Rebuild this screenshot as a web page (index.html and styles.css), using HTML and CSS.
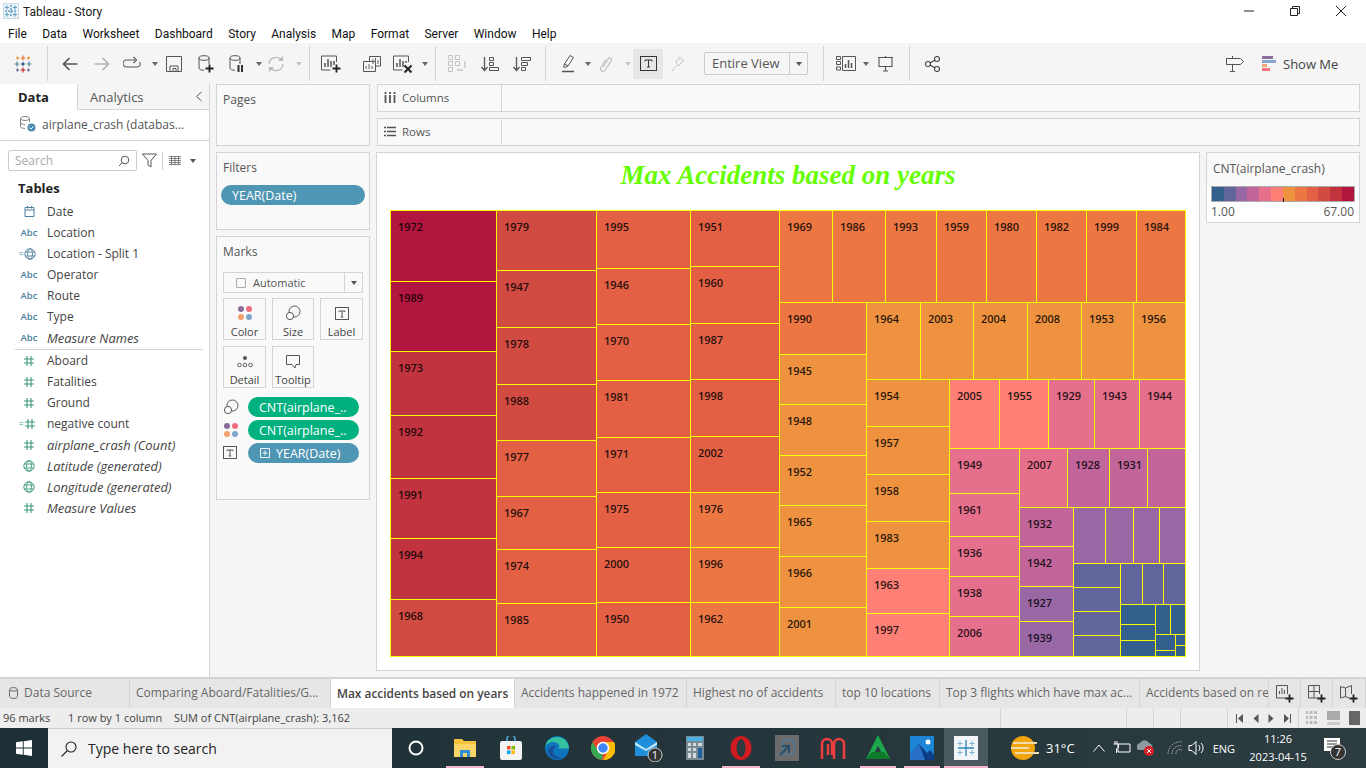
FILE: index.html
```html
<!DOCTYPE html>
<html lang="en">
<head>
<meta charset="utf-8">
<title>Tableau - Story</title>
<link rel="stylesheet" href="styles.css">
</head>
<body>
<svg class="defs" width="0" height="0" aria-hidden="true">
  <symbol id="hash" viewBox="0 0 12 12"><path d="M4 1v10M8 1v10M1 4h10M1 8h10" fill="none" stroke="currentColor" stroke-width="1.1"/></symbol>
  <symbol id="globe" viewBox="0 0 12 12"><g fill="none" stroke="currentColor" stroke-width=".9"><circle cx="6" cy="6" r="5.2"/><ellipse cx="6" cy="6" rx="2.4" ry="5.2"/><path d="M1 4h10M1 8h10"/></g></symbol>
  <symbol id="dots" viewBox="0 0 16 16"><circle cx="4" cy="4" r="3" fill="#8a6d9c"/><circle cx="12" cy="4" r="3" fill="#ee6c80"/><circle cx="4" cy="12" r="3" fill="#f0a070"/><circle cx="12" cy="12" r="3" fill="#7ea6cc"/></symbol>
  <symbol id="size" viewBox="0 0 16 16"><g fill="none" stroke="#555" stroke-width="1"><circle cx="9.5" cy="6.5" r="5.5"/><circle cx="5" cy="11" r="3.6" fill="#fff"/></g></symbol>
  <symbol id="tbox" viewBox="0 0 14 14"><rect x=".5" y=".5" width="13" height="12" fill="none" stroke="#555"/><path d="M4 4h6M7 4v6M5.800 10h2.400M4 4v1M10 4v1" fill="none" stroke="#555"/></symbol>
  <symbol id="plus" viewBox="0 0 10 10"><path d="M5 .5v9M.5 5h9" stroke="#222" stroke-width="2"/></symbol>
</svg>

<header class="titlebar">
  <svg class="app-icon" width="16" height="16" viewBox="0 0 16 16"><rect x=".5" y=".5" width="15" height="15" fill="#eaf3f8" stroke="#c9dbe6"/><g stroke="#2d7da8" stroke-width="1.100"><path d="M8 2v12M2 8h12" stroke-dasharray="2 1"/><path d="M4 2.500v4M2 4.500h4M12 2.500v4M10 4.500h4M4 9.500v4M2 11.500h4M12 9.500v4M10 11.500h4" stroke="#5d9fc4"/></g></svg>
  <span class="title-text">Tableau - Story</span>
  <div class="winctl">
    <svg width="12" height="12" viewBox="0 0 12 12"><path d="M1 6h10" stroke="#222"/></svg>
    <svg width="12" height="12" viewBox="0 0 12 12"><path d="M1.500 3.500h7v7h-7zM3.500 3.500v-2h7v7h-2" fill="none" stroke="#222"/></svg>
    <svg width="12" height="12" viewBox="0 0 12 12"><path d="M1 1l10 10M11 1L1 11" stroke="#222"/></svg>
  </div>
</header>

<nav class="menubar">
  <span>File</span><span>Data</span><span>Worksheet</span><span>Dashboard</span><span>Story</span><span>Analysis</span><span>Map</span><span>Format</span><span>Server</span><span>Window</span><span>Help</span>
</nav>

<div class="toolbar">
  <svg width="20" height="20" viewBox="0 0 20 20"><g stroke-width="1.200"><path d="M10 1.500v5M7.500 4h5" stroke="#e8762d"/><path d="M10 13.500v5M7.500 16h5" stroke="#c72037"/><path d="M4 7.500v5M1.500 10h5" stroke="#5b879b"/><path d="M16 7.500v5M13.500 10h5" stroke="#59879b"/><path d="M10 8v4M8 10h4" stroke="#1f457e"/><path d="M4.500 2.500v3M3 4h3M15.500 2.500v3M14 4h3" stroke="#eb912b"/><path d="M4.500 14.500v3M3 16h3M15.500 14.500v3M14 16h3" stroke="#5c6692"/></g></svg>
  <i class="sep"></i>
  <svg width="16" height="16" viewBox="0 0 16 16"><path d="M15.500 8H1.500M7.500 2l-6 6 6 6" fill="none" stroke="#555" stroke-width="1.700"/></svg>
  <svg width="16" height="16" viewBox="0 0 16 16"><path d="M.5 8h14M8.500 2l6 6-6 6" fill="none" stroke="#b4b4b4" stroke-width="1.700"/></svg>
  <svg width="18" height="16" viewBox="0 0 18 16"><path d="M12 4H3.500a3 3 0 0 0 0 7h11a3 3 0 0 0 2-5M10.500 1l3 3-3 3" fill="none" stroke="#555" stroke-width="1.100"/></svg>
  <i class="caret"></i>
  <svg width="16" height="16" viewBox="0 0 16 16"><path d="M.5.500h15v15H.5zM4 15.500V10h8v5.500M7 12.500h3v3H7z" fill="none" stroke="#555"/></svg>
  <svg width="16" height="18" viewBox="0 0 16 18"><g fill="none" stroke="#555"><ellipse cx="6" cy="3" rx="5" ry="2.300"/><path d="M1 3v10c0 1.300 2 2.300 5 2.300M11 3v6"/></g><use href="#plus" x="7" y="9" width="9" height="9"/></svg>
  <svg width="16" height="18" viewBox="0 0 16 18"><g fill="none" stroke="#555"><ellipse cx="6" cy="3" rx="5" ry="2.300"/><path d="M1 3v10c0 1.300 2 2.300 5 2.300M11 3v6"/></g><path d="M9.500 10v7M13 10v7" stroke="#333" stroke-width="2"/></svg>
  <i class="caret"></i>
  <svg width="18" height="16" viewBox="0 0 18 16"><g fill="none" stroke="#bbb" stroke-width="1.300"><path d="M2 8a7 7 0 0 1 12-4.500M16 8a7 7 0 0 1-12 4.500"/></g><path d="M11 5h5V0zM7 11H2v5z" fill="#bbb"/></svg>
  <i class="caret off"></i>
  <i class="sep"></i>
  <svg width="20" height="18" viewBox="0 0 20 18"><path d="M15.500 7V1H.5v14h9" fill="none" stroke="#555"/><path d="M4 12V8M7 12V4M10 12V6M13 10V6" stroke="#555" stroke-width="1.500"/><use href="#plus" x="11" y="9" width="9" height="9"/></svg>
  <svg width="18" height="16" viewBox="0 0 18 16"><g fill="none" stroke="#555"><path d="M6.500 5V.5h11V10H13"/><path d="M.5 5.500h12v10H.5z" fill="#f5f5f5"/></g><path d="M10 8V3M12.500 8V2M15 8V4M3 13v-3M6 13v-5M9 13v-3" stroke="#666"/></svg>
  <svg width="20" height="18" viewBox="0 0 20 18"><path d="M15.500 7V1H.5v14h9" fill="none" stroke="#555"/><path d="M4 12V8M7 12V4M10 12V6M13 8V6" stroke="#555" stroke-width="1.500"/><path d="M11.500 10.500l7 7M18.500 10.500l-7 7" stroke="#222" stroke-width="2"/></svg>
  <i class="caret"></i>
  <i class="sep"></i>
  <svg width="18" height="18" viewBox="0 0 18 18"><g fill="none" stroke="#c4c4c4"><path d="M.5.500h4v4h-4zM.5 6.500h4v4h-4zM.5 12.500h4v4h-4zM7.500.5h4v4h-4zM7.500 6.500h4v4h-4z"/><path d="M9 15h6M17 6v7" stroke-width="1.300"/></g></svg>
  <svg width="18" height="16" viewBox="0 0 18 16"><path d="M3.500 1v13M.5 11l3 3.500 3-3.500" fill="none" stroke="#555" stroke-width="1.300"/><path d="M8.500 1.500h4v3h-4zM8.500 6.500h4v3h-4zM8.500 11.500h9v3h-9z" fill="none" stroke="#555"/></svg>
  <svg width="18" height="16" viewBox="0 0 18 16"><path d="M3.500 1v13M.5 11l3 3.500 3-3.500" fill="none" stroke="#555" stroke-width="1.300"/><path d="M8.500 1.500h9v3h-9zM8.500 6.500h6v3h-6zM8.500 11.500h4v3h-4z" fill="none" stroke="#555"/></svg>
  <i class="sep"></i>
  <svg width="13" height="19" viewBox="0 0 13 19"><path d="M1.500 13l1-3L8 1.500l3.500 2-5.500 8.500-3 1.500zM2.500 10l3.500 2" fill="none" stroke="#555"/><path d="M0 17.500h12" stroke="#555" stroke-width="1.500"/></svg>
  <i class="caret"></i>
  <svg width="12" height="16" viewBox="0 0 12 16"><path d="M3 11l5.500-8.500a1.800 1.800 0 0 1 3 1.800L5 14.500a2.600 2.600 0 0 1-4.300-2.800L6 3.500" fill="none" stroke="#bbb" stroke-width="1.100"/></svg>
  <i class="caret off"></i>
  <div class="tb-active"><svg width="17" height="15" viewBox="0 0 17 15"><rect x=".5" y=".5" width="16" height="14" fill="none" stroke="#333"/><path d="M5 4h7M8.500 4v7M7 11h3M5 4v1.500M12 4v1.500" fill="none" stroke="#333"/></svg></div>
  <svg width="14" height="16" viewBox="0 0 14 16"><path d="M8 1l5 4-2.500.8L8 10l-2-1.500-1-3.500 3-1.500zM5 10l-4 5" fill="none" stroke="#c4c4c4"/></svg>
  <div class="fit-combo"><span class="fit-label">Entire View</span><span class="fit-arrow"><i class="caret dark"></i></span></div>
  <i class="sep"></i>
  <svg width="20" height="15" viewBox="0 0 20 15"><g fill="none" stroke="#555"><path d="M.5.500h4v3h-4zM.5 5.500h4v3h-4zM.5 11h4v3h-4zM6.500.5h13v14h-13z"/></g><path d="M9.500 12V8M12.500 12V4M15.500 12V7" stroke="#555" stroke-width="1.500"/></svg>
  <i class="caret"></i>
  <svg width="17" height="16" viewBox="0 0 17 16"><path d="M1 1.500h15M2 1.500v9h13v-9M8.500 10.500V15M6 15h5M8.500 0v1.500" fill="none" stroke="#555" stroke-width="1.100"/></svg>
  <i class="sep"></i>
  <svg width="15" height="16" viewBox="0 0 15 16"><g fill="none" stroke="#444" stroke-width="1.100"><circle cx="3" cy="8" r="2.500"/><circle cx="12" cy="3" r="2.500"/><circle cx="12" cy="13" r="2.500"/><path d="M5 7l5-3M5 9l5 3"/></g></svg>
  <svg width="18" height="18" viewBox="0 0 18 18"><path d="M.5 3.500h14l3 3-3 3H.5zM6.500 1v2.500M6.500 9.500V16M4 16.500h5" fill="none" stroke="#555"/></svg>
  <div class="showme">
    <svg width="15" height="15" viewBox="0 0 15 15"><path d="M0 0h11v3H0z" fill="#8a6d9c"/><path d="M0 4h14v3H0z" fill="#86a7cf"/><path d="M0 8h5v3H0z" fill="#f3a46f"/><path d="M0 12h8v3H0z" fill="#f4727d"/></svg>
    <span>Show Me</span>
  </div>
</div>

<main class="main">
  <aside class="sidebar">
    <div class="side-tabs">
      <div class="side-tab active">Data</div>
      <div class="side-tab">Analytics<svg class="collapse" width="8" height="11" viewBox="0 0 8 11"><path d="M6.500 1l-5 4.500 5 4.500" fill="none" stroke="#555"/></svg></div>
    </div>
    <div class="conn">
      <svg width="16" height="16" viewBox="0 0 16 16"><g fill="none" stroke="#777" stroke-width=".9"><ellipse cx="5" cy="2.500" rx="4.500" ry="2"/><path d="M.5 2.500v8c0 1 2 2 4.500 2M9.500 2.500V6M.5 6.500c0 1 2 2 4.500 2"/></g><circle cx="11.500" cy="11.500" r="4" fill="#4a8cb0"/><path d="M9.500 11.500l1.500 1.500 2.500-2.500" fill="none" stroke="#fff"/></svg>
      <span>airplane_crash (databas...</span>
    </div>
    <div class="side-search">
      <div class="search-box"><span>Search</span><svg width="12" height="12" viewBox="0 0 12 12"><circle cx="7" cy="5" r="3.800" fill="none" stroke="#555"/><path d="M4 8l-3 3" stroke="#555"/></svg></div>
      <svg width="15" height="15" viewBox="0 0 15 15"><path d="M.5 1h14L9 7.500V14L6 12V7.500z" fill="none" stroke="#555"/></svg>
      <i class="vline"></i>
      <svg width="12" height="9" viewBox="0 0 12 9"><path d="M0 .5h12M0 2.500h12M0 4.500h12M0 6.500h12M0 8.500h12M2.500 0v9M6 0v9M9.500 0v9" stroke="#666" stroke-width=".8"/></svg>
      <i class="caret dark"></i>
    </div>
    <h2 class="tables-head">Tables</h2>
    <ul class="fields">
      <li><span class="ft blue"><svg width="13" height="13" viewBox="0 0 13 13"><path d="M.5 2.500h9v9h-9zM.5 5h9M3 1v2.500M7 1v2.500" transform="translate(1.500)" fill="none" stroke="currentColor"/></svg></span>Date</li>
      <li><span class="ft blue abc">Abc</span>Location</li>
      <li><span class="ft blue calc">=<svg width="12" height="12"><use href="#globe"/></svg></span>Location - Split 1</li>
      <li><span class="ft blue abc">Abc</span>Operator</li>
      <li><span class="ft blue abc">Abc</span>Route</li>
      <li><span class="ft blue abc">Abc</span>Type</li>
      <li class="em"><span class="ft blue abc">Abc</span>Measure Names</li>
      <li class="divider" aria-hidden="true"></li>
      <li><span class="ft green"><svg width="12" height="12"><use href="#hash"/></svg></span>Aboard</li>
      <li><span class="ft green"><svg width="12" height="12"><use href="#hash"/></svg></span>Fatalities</li>
      <li><span class="ft green"><svg width="12" height="12"><use href="#hash"/></svg></span>Ground</li>
      <li><span class="ft green calc">=<svg width="12" height="12"><use href="#hash"/></svg></span>negative count</li>
      <li class="em"><span class="ft green"><svg width="12" height="12"><use href="#hash"/></svg></span>airplane_crash (Count)</li>
      <li class="em"><span class="ft green"><svg width="12" height="12"><use href="#globe"/></svg></span>Latitude (generated)</li>
      <li class="em"><span class="ft green"><svg width="12" height="12"><use href="#globe"/></svg></span>Longitude (generated)</li>
      <li class="em"><span class="ft green"><svg width="12" height="12"><use href="#hash"/></svg></span>Measure Values</li>
    </ul>
  </aside>

  <section class="cards">
    <div class="card pages"><h3>Pages</h3></div>
    <div class="card filters"><h3>Filters</h3><div class="pill blue-pill filter-pill">YEAR(Date)</div></div>
    <div class="card marks">
      <h3>Marks</h3>
      <div class="mark-type"><span class="mt-check"></span><span class="mt-label">Automatic</span><span class="mt-arrow"><i class="caret dark"></i></span></div>
      <div class="mark-grid">
        <div class="tile"><svg width="16" height="16"><use href="#dots"/></svg><span>Color</span></div>
        <div class="tile"><svg width="16" height="16"><use href="#size"/></svg><span>Size</span></div>
        <div class="tile"><svg width="14" height="14"><use href="#tbox"/></svg><span>Label</span></div>
        <div class="tile"><svg width="16" height="14" viewBox="0 0 16 14"><circle cx="8" cy="3" r="2" fill="#555"/><g fill="none" stroke="#555" stroke-width=".9"><circle cx="2.500" cy="10" r="1.800"/><circle cx="8" cy="10" r="1.800"/><circle cx="13.500" cy="10" r="1.800"/></g></svg><span>Detail</span></div>
        <div class="tile"><svg width="16" height="14" viewBox="0 0 16 14"><path d="M1.500.5h13v9H11l-1 3.500-3-3.500H1.500z" fill="none" stroke="#555"/></svg><span>Tooltip</span></div>
      </div>
      <div class="pill-row"><svg width="16" height="16"><use href="#size"/></svg><div class="pill green-pill">CNT(airplane_..</div></div>
      <div class="pill-row"><svg width="16" height="16"><use href="#dots"/></svg><div class="pill green-pill">CNT(airplane_..</div></div>
      <div class="pill-row"><svg width="14" height="14"><use href="#tbox"/></svg><div class="pill blue-pill with-box"><svg width="10" height="10" viewBox="0 0 10 10"><path d="M.5.500h9v9h-9zM5 2.500v5M2.500 5h5" fill="none" stroke="#fff" stroke-width=".9"/></svg>YEAR(Date)</div></div>
    </div>
  </section>

  <section class="work">
    <div class="shelf"><div class="shelf-label"><svg width="12" height="11" viewBox="0 0 12 11"><path d="M1.500 3v8M6 3v8M10.500 3v8M1.500 0v2M6 0v2M10.500 0v2" stroke="#555" stroke-width="1.800"/></svg><span>Columns</span></div></div>
    <div class="shelf"><div class="shelf-label"><svg width="12" height="11" viewBox="0 0 12 11"><path d="M0 1.500h2M3 1.500h9M0 5.500h2M3 5.500h9M0 9.500h2M3 9.500h9" stroke="#555" stroke-width="1.600"/></svg><span>Rows</span></div></div>
    <div class="stage">
      <div class="viz">
        <h1 class="viz-title">Max Accidents based on years</h1>
        <div class="tm">
          <div class="tc" style="flex-basis:106px">
            <div class="cell c12" style="flex-basis:71px">1972</div>
            <div class="cell c12" style="flex-basis:70px">1989</div>
            <div class="cell c11" style="flex-basis:64px">1973</div>
            <div class="cell c11" style="flex-basis:63px">1992</div>
            <div class="cell c11" style="flex-basis:60px">1991</div>
            <div class="cell c11" style="flex-basis:61px">1994</div>
            <div class="cell c10 end">1968</div>
          </div>
          <div class="tc" style="flex-basis:100px">
            <div class="cell c10" style="flex-basis:60px">1979</div>
            <div class="cell c10" style="flex-basis:57px">1947</div>
            <div class="cell c10" style="flex-basis:57px">1978</div>
            <div class="cell c10" style="flex-basis:56px">1988</div>
            <div class="cell c9" style="flex-basis:56px">1977</div>
            <div class="cell c9" style="flex-basis:53px">1967</div>
            <div class="cell c9" style="flex-basis:54px">1974</div>
            <div class="cell c9 end">1985</div>
          </div>
          <div class="tc" style="flex-basis:94px">
            <div class="cell c9" style="flex-basis:58px">1995</div>
            <div class="cell c9" style="flex-basis:56px">1946</div>
            <div class="cell c9" style="flex-basis:56px">1970</div>
            <div class="cell c9" style="flex-basis:57px">1981</div>
            <div class="cell c9" style="flex-basis:55px">1971</div>
            <div class="cell c9" style="flex-basis:55px">1975</div>
            <div class="cell c9" style="flex-basis:55px">2000</div>
            <div class="cell c9 end">1950</div>
          </div>
          <div class="tc" style="flex-basis:89px">
            <div class="cell c9" style="flex-basis:56px">1951</div>
            <div class="cell c9" style="flex-basis:57px">1960</div>
            <div class="cell c9" style="flex-basis:56px">1987</div>
            <div class="cell c9" style="flex-basis:57px">1998</div>
            <div class="cell c9" style="flex-basis:56px">2002</div>
            <div class="cell c8" style="flex-basis:55px">1976</div>
            <div class="cell c8" style="flex-basis:55px">1996</div>
            <div class="cell c8 end">1962</div>
          </div>
          <div class="tc end">
            <div class="tr" style="flex-basis:92px">
              <div class="cell c8" style="flex-basis:53px">1969</div>
              <div class="cell c8" style="flex-basis:53px">1986</div>
              <div class="cell c8" style="flex-basis:51px">1993</div>
              <div class="cell c8" style="flex-basis:50px">1959</div>
              <div class="cell c8" style="flex-basis:50px">1980</div>
              <div class="cell c8" style="flex-basis:50px">1982</div>
              <div class="cell c8" style="flex-basis:50px">1999</div>
              <div class="cell c8 end">1984</div>
            </div>
            <div class="tr end">
              <div class="tc" style="flex-basis:87px">
                <div class="cell c8" style="flex-basis:52px">1990</div>
                <div class="cell c7" style="flex-basis:50px">1945</div>
                <div class="cell c7" style="flex-basis:51px">1948</div>
                <div class="cell c7" style="flex-basis:50px">1952</div>
                <div class="cell c7" style="flex-basis:51px">1965</div>
                <div class="cell c7" style="flex-basis:51px">1966</div>
                <div class="cell c7 end">2001</div>
              </div>
              <div class="tc end">
                <div class="tr" style="flex-basis:77px">
                  <div class="cell c7" style="flex-basis:54px">1964</div>
                  <div class="cell c7" style="flex-basis:53px">2003</div>
                  <div class="cell c7" style="flex-basis:54px">2004</div>
                  <div class="cell c7" style="flex-basis:54px">2008</div>
                  <div class="cell c7" style="flex-basis:52px">1953</div>
                  <div class="cell c7 end">1956</div>
                </div>
                <div class="tr end">
                  <div class="tc" style="flex-basis:83px">
                    <div class="cell c7" style="flex-basis:47px">1954</div>
                    <div class="cell c7" style="flex-basis:48px">1957</div>
                    <div class="cell c7" style="flex-basis:47px">1958</div>
                    <div class="cell c7" style="flex-basis:47px">1983</div>
                    <div class="cell c6" style="flex-basis:45px">1963</div>
                    <div class="cell c6 end">1997</div>
                  </div>
                  <div class="tc end">
                    <div class="tr" style="flex-basis:69px">
                      <div class="cell c6" style="flex-basis:50px">2005</div>
                      <div class="cell c6" style="flex-basis:49px">1955</div>
                      <div class="cell c5" style="flex-basis:46px">1929</div>
                      <div class="cell c5" style="flex-basis:45px">1943</div>
                      <div class="cell c5 end">1944</div>
                    </div>
                    <div class="tr end">
                      <div class="tc" style="flex-basis:70px">
                        <div class="cell c5" style="flex-basis:45px">1949</div>
                        <div class="cell c5" style="flex-basis:43px">1961</div>
                        <div class="cell c5" style="flex-basis:40px">1936</div>
                        <div class="cell c5" style="flex-basis:40px">1938</div>
                        <div class="cell c5 end">2006</div>
                      </div>
                      <div class="tc end">
                        <div class="tr" style="flex-basis:59px">
                          <div class="cell c5" style="flex-basis:48px">2007</div>
                          <div class="cell c4" style="flex-basis:42px">1928</div>
                          <div class="cell c4" style="flex-basis:38px">1931</div>
                          <div class="cell c4 end"></div>
                        </div>
                        <div class="tr end">
                          <div class="tc" style="flex-basis:54px">
                            <div class="cell c4" style="flex-basis:39px">1932</div>
                            <div class="cell c4" style="flex-basis:40px">1942</div>
                            <div class="cell c3" style="flex-basis:35px">1927</div>
                            <div class="cell c3 end">1939</div>
                          </div>
                          <div class="tc end">
                            <div class="tr" style="flex-basis:56px">
                              <div class="cell c3" style="flex-basis:32px"></div>
                              <div class="cell c3" style="flex-basis:28px"></div>
                              <div class="cell c3" style="flex-basis:26px"></div>
                              <div class="cell c3 end"></div>
                            </div>
                            <div class="tr end">
                              <div class="tc" style="flex-basis:47px">
                                <div class="cell c2" style="flex-basis:24px"></div>
                                <div class="cell c2" style="flex-basis:24px"></div>
                                <div class="cell c2" style="flex-basis:24px"></div>
                                <div class="cell c2 end"></div>
                              </div>
                              <div class="tc end">
                                <div class="tr" style="flex-basis:41px">
                                  <div class="cell c2" style="flex-basis:22px"></div>
                                  <div class="cell c2" style="flex-basis:21px"></div>
                                  <div class="cell c2 end"></div>
                                </div>
                                <div class="tr end">
                                  <div class="tc" style="flex-basis:35px">
                                    <div class="cell c1" style="flex-basis:20px"></div>
                                    <div class="cell c1" style="flex-basis:16px"></div>
                                    <div class="cell c1 end"></div>
                                  </div>
                                  <div class="tc end">
                                    <div class="tr" style="flex-basis:30px">
                                      <div class="cell c1" style="flex-basis:15px"></div>
                                      <div class="cell c1 end"></div>
                                    </div>
                                    <div class="tr end">
                                      <div class="tc" style="flex-basis:20px">
                                        <div class="cell c1" style="flex-basis:16px"></div>
                                        <div class="cell c1 end"></div>
                                      </div>
                                      <div class="tc end">
                                        <div class="cell c1" style="flex-basis:11px"></div>
                                        <div class="cell c1 end"></div>
                                      </div>
                                    </div>
                                  </div>
                                </div>
                              </div>
                            </div>
                          </div>
                        </div>
                      </div>
                    </div>
                  </div>
                </div>
              </div>
            </div>
          </div>
        </div>
      </div>
      <aside class="legend">
        <div class="legend-title">CNT(airplane_crash)</div>
        <div class="legend-body">
          <div class="ramp"><i class="c1"></i><i class="c2"></i><i class="c3"></i><i class="c4"></i><i class="c5"></i><i class="c6"></i><i class="c7"></i><i class="c8"></i><i class="c9"></i><i class="c10"></i><i class="c11"></i><i class="c12"></i><b class="tick"></b></div>
          <div class="ramp-labels"><span>1.00</span><span>67.00</span></div>
        </div>
      </aside>
    </div>
  </section>
</main>

<div class="tabs">
  <div class="tab"><svg width="9" height="12" viewBox="0 0 9 12"><path d="M.5 2.500c0-2.500 8-2.500 8 0v7c0 2.500-8 2.500-8 0zM.5 2.500c0 2 8 2 8 0" fill="none" stroke="#666"/></svg>Data Source</div>
  <div class="tab">Comparing Aboard/Fatalities/G...</div>
  <div class="tab current">Max accidents based on years</div>
  <div class="tab">Accidents happened in 1972</div>
  <div class="tab">Highest no of accidents</div>
  <div class="tab">top 10 locations</div>
  <div class="tab">Top 3 flights which have max ac...</div>
  <div class="tab">Accidents based on re</div>
  <div class="tab icon"><svg width="18" height="18" viewBox="0 0 18 18"><path d="M10 13H.5V.5h11V9" fill="none" stroke="#555"/><path d="M3.500 9V6M6 9V3M8.500 9V5" stroke="#555"/><use href="#plus" x="9" y="9" width="9" height="9"/></svg></div>
  <div class="tab icon"><svg width="18" height="18" viewBox="0 0 18 18"><path d="M10 13H.5V.5h11V9M.5 6.500h11M6 .5v12" fill="none" stroke="#555"/><use href="#plus" x="9" y="9" width="9" height="9"/></svg></div>
  <div class="tab icon"><svg width="18" height="18" viewBox="0 0 18 18"><path d="M.5 1.500l5 1.500 6-2.500V9M.5 1.500V13l5-1.500L9 13M5.500 3v8.500" fill="none" stroke="#555"/><use href="#plus" x="9" y="9" width="9" height="9"/></svg></div>
</div>

<div class="status">
  <span>96 marks</span><span>1 row by 1 column</span><span class="status-sum">SUM of CNT(airplane_crash): 3,162</span>
  <i class="st-cell"></i><i class="st-cell"></i><i class="st-cell"></i><i class="st-cell"></i>
  <div class="st-nav">
    <svg width="8" height="9" viewBox="0 0 8 9"><path d="M.5 0v9" stroke="#555"/><path d="M7 0v9L2 4.500z" fill="#555"/></svg>
    <svg width="6" height="9" viewBox="0 0 6 9"><path d="M5.500 0v9L.5 4.500z" fill="#555"/></svg>
    <svg width="6" height="9" viewBox="0 0 6 9"><path d="M.5 0v9l5-4.500z" fill="#555"/></svg>
    <svg width="8" height="9" viewBox="0 0 8 9"><path d="M7.500 0v9" stroke="#555"/><path d="M1 0v9l5-4.500z" fill="#555"/></svg>
  </div>
  <div class="st-view">
    <svg width="13" height="14" viewBox="0 0 13 14"><path d="M.5 0v14M5 0v14M9.500 0v14" stroke="#bbb" stroke-width="3" stroke-dasharray="3 2"/></svg>
    <svg width="13" height="14" viewBox="0 0 13 14"><path d="M0 0h13v9H0z" fill="#aaa"/><path d="M0 11h13v3H0z" fill="#ccc"/></svg>
    <svg width="13" height="14" viewBox="0 0 13 14"><path d="M1 0h11v14H1z" fill="#666"/></svg>
  </div>
</div>

<footer class="taskbar">
  <div class="start"><svg width="16" height="16" viewBox="0 0 16 16"><path d="M0 2.300l6.800-1v6.300H0zM7.700 1.200L16 0v7.600H7.700zM0 8.500h6.800v6.300L0 13.800zM7.700 8.500H16V16l-8.300-1.200z" fill="#fff"/></svg></div>
  <div class="task-search"><svg width="16" height="16" viewBox="0 0 16 16"><circle cx="10" cy="6" r="5" fill="none" stroke="#222" stroke-width="1.100"/><path d="M6.500 9.500L.5 15.500" stroke="#222" stroke-width="1.100"/></svg><span>Type here to search</span></div>
  <div class="task-apps">
    <div class="ta cortana"><svg width="16" height="16" viewBox="0 0 16 16"><circle cx="8" cy="8" r="6.500" fill="none" stroke="#fff" stroke-width="2"/></svg></div>
    <div class="ta run"><svg width="22" height="20" viewBox="0 0 22 20"><path d="M0 1h8l2 2h12v16H0z" fill="#f4c33b"/><path d="M0 6h22v13H0z" fill="#fbd667"/><path d="M6 12h10v7H6z" fill="#2f8fd6"/><path d="M9 15h4v4H9z" fill="#fbd667"/></svg></div>
    <div class="ta"><svg width="22" height="24" viewBox="0 0 22 24"><path d="M7 6V3a4 4 0 0 1 8 0v3" fill="none" stroke="#4ab4e8" stroke-width="1.500"/><rect x="0" y="5" width="22" height="19" rx="2" fill="#f3f3f3"/><path d="M7 10h3.500v3.500H7z" fill="#f25022"/><path d="M11.500 10H15v3.500h-3.500z" fill="#7fba00"/><path d="M7 14.500h3.500V18H7z" fill="#00a4ef"/><path d="M11.500 14.500H15V18h-3.500z" fill="#ffb900"/></svg></div>
    <div class="ta"><svg width="24" height="24" viewBox="0 0 24 24"><circle cx="12" cy="12" r="12" fill="#0e74bc"/><path d="M24 13c0-7-5-12-12-12C6 1 1 5 .5 10 3 6 8 5 12 7c3 1.500 3 4 1 5.500h11z" fill="#35c1a0"/><path d="M8 15c0 4 4 7 9 6-5 4-13 1-14-6 1-4 5-6 8-5-2 1-3 3-3 5z" fill="#1a4f9c"/></svg></div>
    <div class="ta"><svg width="24" height="24" viewBox="0 0 24 24"><circle cx="12" cy="12" r="12" fill="#ea4335"/><path d="M12 6h11a12 12 0 0 1-11 18l5-9a6 6 0 0 0-5-9z" fill="#fbbc05"/><path d="M1.600 6L7 15a6 6 0 0 0 5 3l-1 6A12 12 0 0 1 1.600 6z" fill="#34a853"/><circle cx="12" cy="12" r="5.500" fill="#4285f4" stroke="#fff" stroke-width="1.500"/></svg></div>
    <div class="ta"><svg width="28" height="28" viewBox="0 0 28 28"><path d="M0 8l11-8 11 8v14H0z" fill="#1f8fdc"/><path d="M0 8l11 7 11-7v3l-11 6-11-6z" fill="#bfe6fb"/><circle cx="20" cy="21" r="7" fill="#333" stroke="#ccc"/><text x="20" y="25" class="badge">1</text></svg></div>
    <div class="ta"><svg width="18" height="24" viewBox="0 0 18 24"><path d="M0 0h18v24H0z" fill="#7a8a93"/><path d="M1 1h16v4H1z" fill="#4db2e8"/><path d="M2 7h3v3H2zM7 7h3v3H7zM12 7h4v3h-4zM2 12h3v3H2zM7 12h3v3H7zM2 17h3v5H2zM7 17h3v5H7z" fill="#d5dbde"/><path d="M12 12h4v10h-4z" fill="#1f5f9c"/></svg></div>
    <div class="ta run"><svg width="24" height="24" viewBox="0 0 24 24"><ellipse cx="12" cy="12" rx="10.500" ry="12" fill="#d11b20"/><ellipse cx="12" cy="12" rx="4.500" ry="9" fill="#2d3a3e"/></svg></div>
    <div class="ta"><svg width="24" height="26" viewBox="0 0 24 26"><path d="M0 0h24v26H0z" fill="#6b6b6b"/><path d="M8 5h11v14H8z" fill="none" stroke="#4a7fa8"/><path d="M5 20l8-8M7 11h7v7" fill="none" stroke="#26506e" stroke-width="2"/></svg></div>
    <div class="ta"><svg width="26" height="24" viewBox="0 0 26 24"><path d="M2 23V8a5 5 0 0 1 10 0v11M14 23V8a5 5 0 0 1 10 0v15M8 19V8" fill="none" stroke="#ee3d3d" stroke-width="2.500"/></svg></div>
    <div class="ta run narrow"><svg width="24" height="26" viewBox="0 0 24 26"><path d="M12 0l12 24h-6L12 11 6 24H0z" fill="#1aa84a"/><path d="M0 24l6-7h12l6 7z" fill="#0d7a2c"/><path d="M9 17l3-6 3 6z" fill="#2d3a3e"/></svg></div>
    <div class="ta run narrow"><svg width="24" height="24" viewBox="0 0 24 24"><path d="M0 0h24v24H0z" fill="#1c85d6"/><circle cx="18" cy="6" r="2.500" fill="#fff"/><path d="M0 19l9-11 8 9 3-3 4 5v5H0z" fill="#0c3d86"/><path d="M9 8l6 16H0v-5z" fill="#2a6fc9"/></svg></div>
    <div class="ta run narrow active"><svg width="24" height="24" viewBox="0 0 24 24"><path d="M0 0h24v24H0z" fill="#f2f6f9"/><g stroke="#2d86b8" stroke-width="1.300"><path d="M12 4v16M4 12h16"/></g><path d="M6 5v5M3.500 7.500h5M18 5v5M15.500 7.500h5M6 14v5M3.500 16.500h5M18 14v5M15.500 16.500h5" stroke="#7fb3cf"/></svg></div>
  </div>
  <div class="tray">
    <svg class="weather" width="28" height="26" viewBox="0 0 28 26"><circle cx="12" cy="13" r="12" fill="#f2a40c"/><path d="M2 8h24M0 13h18M4 18h24" stroke="#f0dcae" stroke-width="2"/></svg>
    <span class="temp">31°C</span>
    <svg class="t1" width="12" height="8" viewBox="0 0 12 8"><path d="M.5 7.500L6 1l5.500 6.500" fill="none" stroke="#fff"/></svg>
    <svg class="t2" width="18" height="14" viewBox="0 0 18 14"><path d="M5 3h12v8H5zM2 0v3M4 0v3M.5 3h5v3l-2 2v4" fill="none" stroke="#fff"/></svg>
    <svg class="t3" width="18" height="18" viewBox="0 0 18 18"><path d="M1 11a4 4 0 0 1 2-7 5 5 0 0 1 9 0 4 4 0 0 1 2 7z" fill="#8f9a9e"/><circle cx="12" cy="12" r="5" fill="#d91f26"/><path d="M10 10l4 4M14 10l-4 4" stroke="#fff"/></svg>
    <svg class="t4" width="16" height="14" viewBox="0 0 16 14"><path d="M1 13A12 12 0 0 1 15 1M5 13a8 8 0 0 1 10-8M9 13a4 4 0 0 1 6-4" fill="none" stroke="#bbb" stroke-dasharray="1.500 1"/></svg>
    <svg class="t5" width="18" height="14" viewBox="0 0 18 14"><path d="M1 4.500h3l4-4v13l-4-4H1zM10.500 4a4 4 0 0 1 0 6M13 2a7 7 0 0 1 0 10" fill="none" stroke="#fff"/></svg>
    <span class="lang">ENG</span>
    <div class="clock"><span>11:26</span><span>2023-04-15</span></div>
    <svg class="notif" width="24" height="24" viewBox="0 0 24 24"><path d="M1 2h16v13H1z" fill="#fff"/><path d="M4 5h10M4 8h10M4 11h6" stroke="#333"/><circle cx="15" cy="16" r="7.500" fill="#333" stroke="#ccc"/><text x="15" y="20" class="badge">7</text></svg>
  </div>
</footer>
</body>
</html>
```
FILE: styles.css
```css
* { box-sizing: border-box; }
html, body { margin: 0; padding: 0; }
body {
  width: 1366px; height: 768px; overflow: hidden;
  display: flex; flex-direction: column;
  font-family: "Open Sans", "Noto Sans", sans-serif;
  font-size: 12px; color: #333; background: #f5f5f5;
}
.defs { position: absolute; }
h1, h2, h3, ul { margin: 0; padding: 0; }
i { font-style: normal; display: block; }

/* title + menu */
.titlebar { height: 22px; background: #fff; display: flex; align-items: center; padding-left: 3px; flex: none; }
.title-text { margin-left: 4px; padding-top: 2px; color: #222; font: 12px Roboto, sans-serif; }
.winctl { margin-left: auto; display: grid; grid-template-columns: 46px 46px 46px; width: 138px; margin-right: 2px; justify-items: center; }
.menubar { height: 21px; background: #fff; display: flex; align-items: center; gap: 15.400px; padding: 2px 0 0 8px; flex: none; color: #111; font: 12px Roboto, sans-serif; }

/* toolbar */
.toolbar {
  height: 41px; flex: none; background: #f5f5f5; padding-left: 13px; align-items: center;
  display: grid;
  grid-template-columns: 34px 15px 32px 29px 26px 17px 32px 31px 24px 14px 26px 16px 12px 42px 30px 26px 16px 13px 33px 32px 32px 17px 20px 18px 22px 11px 38px 33px 119px 13px 24px 17px 32px 16px 301px 36px 104px;
}
.sep { width: 1px; height: 35px; background: #d4d4d4; }
.caret { width: 0; height: 0; margin-left: 3px; border-left: 3.500px solid transparent; border-right: 3.500px solid transparent; border-top: 4px solid #666; }
.caret.off { border-top-color: #c4c4c4; }
.caret.dark { border-top-color: #555; margin-left: 0; }
.tb-active { width: 30px; height: 30px; background: #e6e6e6; display: flex; align-items: center; justify-content: center; }
.fit-combo { width: 104px; height: 23px; border: 1px solid #ccc; border-radius: 2px; display: flex; align-items: center; font-size: 13px; color: #555; }
.fit-label { flex: 1; padding: 0 0 2px 7px; }
.fit-arrow { width: 18px; height: 21px; border-left: 1px solid #ccc; display: flex; align-items: center; justify-content: center; }
.showme { display: flex; align-items: center; gap: 6px; font-size: 13px; color: #444; }

/* main */
.main { flex: none; height: 593px; display: flex; }
.sidebar { width: 210px; flex: none; background: #fff; border-right: 1px solid #d4d4d4; }
.side-tabs { display: flex; height: 26px; }
.side-tab { display: flex; align-items: center; font-size: 13px; color: #555; flex: 1; padding-left: 12px; background: #f5f5f5; border-left: 1px solid #d4d4d4; border-bottom: 1px solid #d4d4d4; position: relative; }
.side-tab.active { flex: none; width: 77px; background: #fff; border: 0; padding-left: 18px; font-weight: 700; color: #222; }
.collapse { position: absolute; right: 6px; top: 7px; }
.conn { height: 31px; border-bottom: 1px solid #d4d4d4; display: flex; align-items: center; padding: 0 0 2px 20px; gap: 6px; font-size: 12px; color: #555; }
.side-search { margin: 9px 0 0 8px; height: 21px; display: flex; align-items: center; }
.search-box { width: 129px; height: 21px; border: 1px solid #ccc; border-radius: 2px; background: #fff; display: flex; align-items: center; justify-content: space-between; padding: 0 6px; color: #aaa; margin-right: 5px; }
.vline { width: 1px; height: 18px; background: #d4d4d4; margin: 0 6px 0 5px; }
.side-search .caret { margin-left: 9px; }
.tables-head { margin: 7px 0 3px 18px; font-size: 13px; line-height: 20px; font-weight: 700; color: #222; }
.fields { list-style: none; }
.fields li { height: 21px; display: flex; align-items: center; padding-left: 20px; color: #444; }
.fields li.divider { height: 1px; padding: 0; margin: 1px 6px 0 15px; background: #d4d4d4; }
.fields li.em { font-style: italic; font-size: 12.900px; }
.ft { width: 18px; margin-right: 9px; display: flex; align-items: center; justify-content: center; font-style: normal; flex: none; }
.ft.blue { color: #4d7f9e; }
.ft.green { color: #3d9b77; }
.ft.abc { font-size: 9.500px; font-weight: 600; }
.ft.calc { font-size: 9px; margin-left: -2px; margin-right: 11px; }

/* cards */
.cards { width: 154px; margin-left: 6px; flex: none; display: flex; flex-direction: column; gap: 6px; }
.card { background: #f9f9f9; border: 1px solid #d4d4d4; padding: 0 6px; }
.card h3 { font-weight: 400; font-size: 12px; color: #555; line-height: 16px; }
.pages { height: 62px; padding-top: 7px; }
.filters { height: 78px; padding: 7px 4px 0; }
.filters h3 { padding-left: 2px; }
.marks { height: 264px; padding-top: 7px; }
.pill { height: 20px; border-radius: 10px; color: #fff; display: flex; align-items: center; font-size: 12.500px; padding-left: 11px; width: 111px; }
.green-pill { background: #00b180; }
.blue-pill { background: #4e96b3; }
.filter-pill { width: 144px; margin-top: 9px; }
.with-box { gap: 6px; padding-left: 12px; }
.mark-type { margin: 12px 0 5px; width: 140px; height: 21px; border: 1px solid #d4d4d4; background: #f9f9f9; display: flex; align-items: center; font-size: 11px; color: #555; }
.mt-check { width: 10px; height: 10px; border: 1px solid #aaa; margin: 0 7px 0 12px; border-radius: 1px; }
.mt-label { flex: 1; }
.mt-arrow { width: 18px; height: 19px; border-left: 1px solid #d4d4d4; display: flex; align-items: center; justify-content: center; }
.mark-grid { display: grid; grid-template-columns: 43px 42px 43px; gap: 6px 6px; margin-bottom: 9px; }
.tile { height: 42px; border: 1px solid #d4d4d4; background: #f9f9f9; display: flex; flex-direction: column; align-items: center; justify-content: flex-end; font-size: 11px; color: #444; padding-bottom: 0; gap: 3px; }
.pill-row { display: flex; align-items: center; justify-content: space-between; width: 136px; height: 20px; margin-bottom: 3px; padding-left: 0; }

/* work */
.work { margin-left: 6px; width: 984px; flex: none; display: flex; flex-direction: column; gap: 6px; }
.shelf { height: 28px; background: #f9f9f9; border: 1px solid #d4d4d4; display: flex; margin-left: 1px; }
.shelf-label { width: 124px; border-right: 1px solid #d4d4d4; display: flex; align-items: center; gap: 6px; padding: 0 0 2px 6px; color: #555; font-size: 11.500px; }
.stage { display: flex; gap: 6px; align-items: flex-start; }
.viz { width: 824px; height: 519px; background: #fff; border: 1px solid #d4d4d4; padding: 0 13px; }
.viz-title { height: 44px; margin-bottom: 13px; display: flex; align-items: center; justify-content: center; font: italic 700 27px "Liberation Serif", serif; color: #66ff00; }
.legend { width: 154px; height: 71px; border: 1px solid #d4d4d4; background: #fff; }
.legend-title { height: 33px; background: #f9f9f9; padding: 7px 0 0 6px; font-size: 12px; color: #555; }
.legend-body { padding: 0 4px; }
.ramp { display: flex; height: 16px; border: 1px solid #aaa; position: relative; }
.ramp i { flex: 1; }
.tick { position: absolute; left: 71px; bottom: -1px; width: 1px; height: 4px; background: #111; }
.ramp-labels { display: flex; justify-content: space-between; color: #555; font-size: 12px; line-height: 16px; padding: 2px 1px 0 0; }

/* treemap */
.tm { width: 796px; height: 447px; display: flex; border-right: 1px solid #ff0; border-bottom: 1px solid #ff0; }
.tc, .tr { display: flex; flex-grow: 0; flex-shrink: 0; min-width: 0; min-height: 0; }
.tc { flex-direction: column; }
.tc.end, .tr.end { flex: 1 1 0; }
.cell {
  flex-grow: 0; flex-shrink: 0; min-width: 0; min-height: 0; overflow: hidden;
  border-top: 1px solid #ff0; border-left: 1px solid #ff0;
  padding: 8px 0 0 7px; font-size: 11px; line-height: 16px; font-weight: 600; color: rgba(0,0,0,.85);
}
.cell:empty { padding: 0; }
.cell.end { flex: 1 1 0; }
.c1 { background: #33608c; }
.c2 { background: #62659b; }
.c3 { background: #9a67a5; }
.c4 { background: #c2659b; }
.c5 { background: #e66f8c; }
.c6 { background: #fd7f76; }
.c7 { background: #ee9240; }
.c8 { background: #ed7743; }
.c9 { background: #e36045; }
.c10 { background: #d24b43; }
.c11 { background: #c1343f; }
.c12 { background: #b2163e; }

/* tabs */
.tabs {
  height: 31px; flex: none; background: #e6e6e6; border-top: 2px solid #d4d4d4;
  display: grid; grid-template-columns: 130px 201px 184px 172px 149px 104px 200px 129px 32px 32px 33px; color: #666; font-size: 12px;
}
.tab { display: flex; align-items: center; gap: 6px; padding: 0 0 2px 6px; border-right: 1px solid #d4d4d4; white-space: nowrap; overflow: hidden; }
.tab:first-child { padding-left: 9px; }
.tab.current { background: #fff; font-weight: 600; color: #444; font-size: 11.900px; }
.tab.icon { padding: 0; justify-content: center; }

/* status */
.status {
  height: 20px; flex: none; background: #ededed; font-size: 11px; color: #444;
  display: grid; grid-template-columns: 65px 106px 826px 126px 27px 27px 47px 71px 68px; padding-left: 3px; align-items: stretch;
}
.status span { display: flex; align-items: center; padding-bottom: 2px; }
.st-cell { border-left: 1px solid #d4d4d4; }
.st-nav { border-left: 1px solid #d4d4d4; display: flex; align-items: center; justify-content: center; gap: 9px; }
.st-view { border-left: 1px solid #d4d4d4; display: flex; align-items: center; gap: 8px; padding-left: 7px; }

/* taskbar */
.taskbar { height: 40px; flex: none; display: flex; align-items: stretch; background: linear-gradient(90deg, #1b2f34, #2c3c41); color: #fff; }
.start { width: 48px; display: flex; align-items: center; justify-content: center; }
.task-search { width: 344px; background: #f2f2f2; border-top: 1px solid #ccc; display: flex; align-items: center; padding-left: 13px; gap: 11px; font-size: 14px; color: #222; }
.task-apps { display: flex; margin-left: 1px; }
.ta { width: 46px; flex: none; display: flex; align-items: center; justify-content: center; position: relative; }
.ta.cortana { margin-right: 3px; }
.ta.narrow { width: 44px; }
.ta.run::after { content: ""; position: absolute; left: 4px; right: 4px; bottom: 0; height: 2px; background: #f4b6c8; }
.ta.active { background: #4a5a5e; }
.ta.active::after { left: 0; right: 0; }
.badge { fill: #fff; font-size: 11px; text-anchor: middle; font-family: "Open Sans", sans-serif; }
.tray { flex: 1; display: flex; align-items: center; }
.weather { margin-left: 23px; }
.temp { margin-left: 7px; font-size: 13px; }
.t1 { margin-left: 18px; }
.t2 { margin-left: 8px; }
.t3 { margin-left: 6px; }
.t4 { margin-left: 12px; }
.t5 { margin-left: 5px; }
.lang { margin-left: 7px; font-size: 11px; }
.clock { margin-left: 12px; width: 62px; display: flex; flex-direction: column; align-items: center; font-size: 11px; line-height: 18px; }
.notif { margin-left: 14px; }
```
